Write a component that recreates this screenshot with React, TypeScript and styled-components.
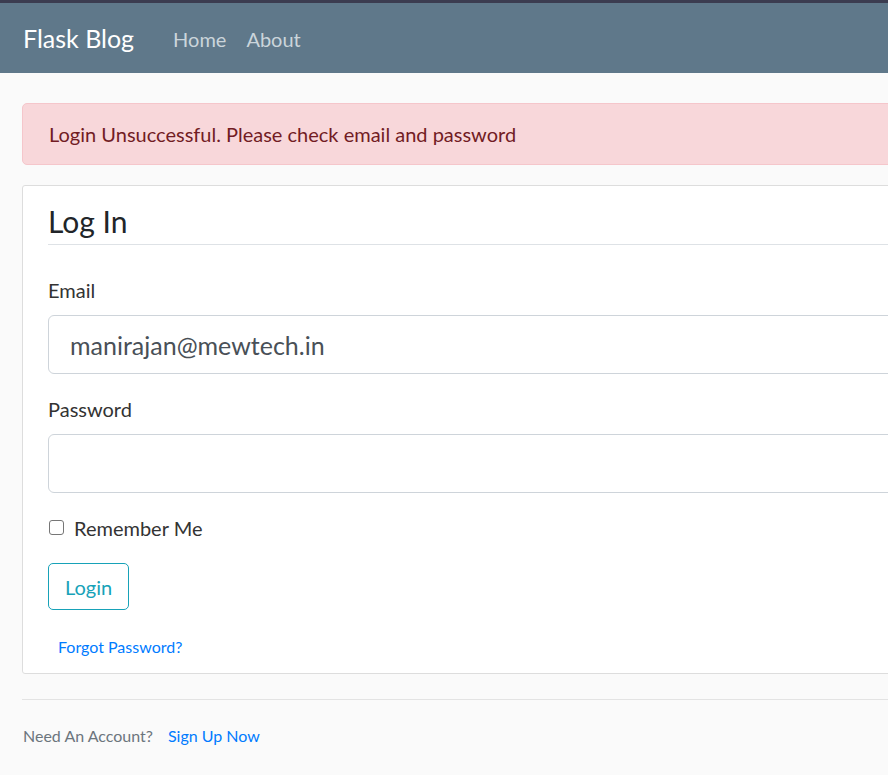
import * as React from 'react';
import styled, { createGlobalStyle } from 'styled-components';

const GlobalStyle = createGlobalStyle`
  html, body {
    margin: 0;
    padding: 0;
    overflow: hidden;
  }

  body {
    font-family: Lato, 'Open Sans', sans-serif;
    font-size: 20px;
    line-height: 1.5;
    color: #333333;
    background: #fafafa;
  }

  * {
    box-sizing: border-box;
  }
`;

const Page = styled.div`
  min-height: 100vh;
  border-top: 3px solid #3b3c50;
`;

const SiteHeader = styled.nav`
  display: flex;
  align-items: center;
  height: 70px;
  padding: 2px 23px 0 23px;

  background-color: #5f788a;
`;

const Brand = styled.a`
  margin-right: 29px;

  font-size: 25px;
  line-height: 1.5;
  color: #fff;
  text-decoration: none;
`;

const NavLink = styled.a`
  padding: 0 10px;

  font-size: 20px;
  color: #cbd5db;
  text-decoration: none;
`;

const Main = styled.main`
  width: 1140px;
  padding: 30px 0 0 22px;
`;

const Alert = styled.div`
  height: 62px;
  margin-bottom: 20px;
  padding: 15px 26px 11px 26px;

  color: #721c24;
  background-color: #f8d7da;
  border: 1px solid #f5c6cb;
  border-radius: 5px;
`;

const ContentSection = styled.div`
  margin-bottom: 25px;
  padding: 13px 25px 13px 25px;

  background: #ffffff;
  border: 1px solid #dddddd;
  border-radius: 3px;
`;

const Fieldset = styled.fieldset`
  margin: 0;
  padding: 0;
  border: 0;
`;

const Legend = styled.div`
  margin-bottom: 30px;

  font-size: 30px;
  line-height: 1.5;
  color: #212529;
  border-bottom: 1px solid #dee2e6;
`;

const FormGroup = styled.div`
  margin-bottom: 20px;
`;

const Label = styled.label`
  display: block;
  margin-bottom: 10px;

  color: #333333;
`;

const Input = styled.input`
  display: block;
  width: 100%;
  height: 59px;
  padding: 0 21px;

  font-family: inherit;
  font-size: 25px;
  color: #495057;
  background: #fff;
  border: 1px solid #ced4da;
  border-radius: 6px;
  outline: none;
`;

const CheckRow = styled.label`
  display: flex;
  align-items: center;
  gap: 10px;
  margin-bottom: 20px;
`;

const Checkbox = styled.input`
  appearance: none;
  width: 15px;
  height: 15px;
  margin: 0 0 2px 1px;

  background: #fff;
  border: 1.5px solid #767676;
  border-radius: 3px;
`;

const OutlineButton = styled.button`
  height: 47px;
  margin-bottom: 20px;
  padding: 0 16px;

  font-family: inherit;
  font-size: 20px;
  color: #17a2b8;
  background: transparent;
  border: 1px solid #17a2b8;
  border-radius: 5px;
`;

const SmallRow = styled.div`
  display: flex;
  align-items: center;
  height: 30px;
  padding-top: 4px;
`;

const SmallLink = styled.a<{ $gap?: number }>`
  margin-left: ${(p) => p.$gap ?? 0}px;

  font-size: 16px;
  color: #007bff;
  text-decoration: none;
`;

const Footer = styled.div`
  display: flex;
  align-items: center;
  padding: 24px 0 0 1px;

  border-top: 1px solid #e3e3e3;
`;

const Muted = styled.small`
  font-size: 16px;
  color: #6c757d;
`;

export default function App() {
  return (
    <Page>
      <GlobalStyle />
      <SiteHeader>
        <Brand href="#">Flask Blog</Brand>
        <NavLink href="#">Home</NavLink>
        <NavLink href="#">About</NavLink>
      </SiteHeader>
      <Main>
        <Alert>Login Unsuccessful. Please check email and password</Alert>
        <ContentSection>
          <form>
            <Fieldset>
              <Legend>Log In</Legend>
              <FormGroup>
                <Label>Email</Label>
                <Input type="email" defaultValue="manirajan@mewtech.in" />
              </FormGroup>
              <FormGroup>
                <Label>Password</Label>
                <Input type="password" />
              </FormGroup>
              <CheckRow>
                <Checkbox type="checkbox" />
                Remember Me
              </CheckRow>
            </Fieldset>
            <OutlineButton type="button">Login</OutlineButton>
            <SmallRow>
              <SmallLink href="#" $gap={10}>
                Forgot Password?
              </SmallLink>
            </SmallRow>
          </form>
        </ContentSection>
        <Footer>
          <Muted>Need An Account?</Muted>
          <SmallLink href="#" $gap={15}>
            Sign Up Now
          </SmallLink>
        </Footer>
      </Main>
    </Page>
  );
}
